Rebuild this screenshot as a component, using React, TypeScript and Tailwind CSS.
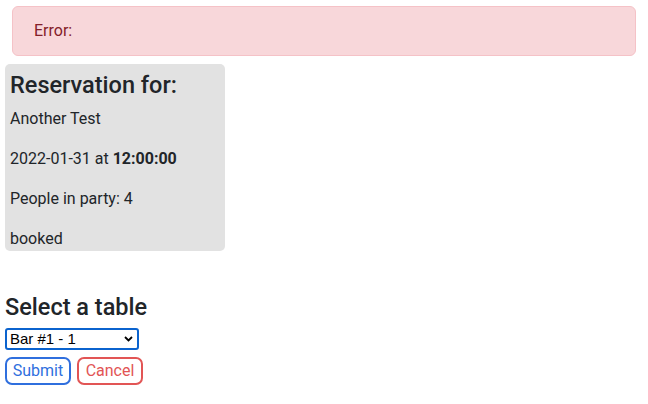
import React from "react";

export default function App() {
  return (
    <div className="min-h-[404px] w-[648px] bg-white text-[#212529]" style={{ fontFamily: "Roboto, 'Noto Sans', sans-serif" }}>
      <div className="px-[12px] pt-[6px]">
        <div className="h-[50px] rounded-[6px] border border-[#f5c2c7] bg-[#f8d7da] px-[21px] flex items-center text-[16px] text-[#842029]">
          Error:
        </div>
      </div>
      <div className="mx-[5px] mt-[8px] w-[220px] rounded-[5px] bg-[#e2e2e2] px-[5px] pb-[0px] pt-[7px]">
        <h2 className="text-[23.5px] font-medium leading-[29px] mb-[7px]">Reservation for:</h2>
        <p className="text-[16px] leading-[24px] mb-[16px]">Another Test</p>
        <p className="text-[16px] leading-[24px] mb-[16px]">
          2022-01-31 at <b className="font-bold">12:00:00</b>
        </p>
        <p className="text-[16px] leading-[24px] mb-[16px]">People in party: 4</p>
        <p className="text-[16px] leading-[24px]">booked</p>
      </div>
      <div className="px-[5px] pt-[42px]">
        <h3 className="text-[23.5px] font-medium leading-[28px] mb-[7px]">Select a table</h3>
        <div className="relative w-[134px] h-[22px] rounded-[3px] border-2 border-[#0b63ce] bg-white">
          <span className="absolute left-[3px] top-0 leading-[18px] text-[15px] text-black" style={{ fontFamily: "'Liberation Sans', Arial, sans-serif" }}>Bar #1 - 1</span>
          <svg className="absolute right-[4px] top-[6px]" width="9" height="6" viewBox="0 0 9 6">
            <path d="M1 1 L4.5 4.5 L8 1" fill="none" stroke="black" strokeWidth="1.8" />
          </svg>
        </div>
        <div className="mt-[7px] flex gap-[6px]">
          <button className="h-[28px] w-[66px] rounded-[7px] border-2 border-[#2f6fde] text-[16px] text-[#2f6fde]">Submit</button>
          <button className="h-[28px] w-[66px] rounded-[7px] border-2 border-[#e25555] text-[16px] text-[#e25555]">Cancel</button>
        </div>
      </div>
    </div>
  );
}
